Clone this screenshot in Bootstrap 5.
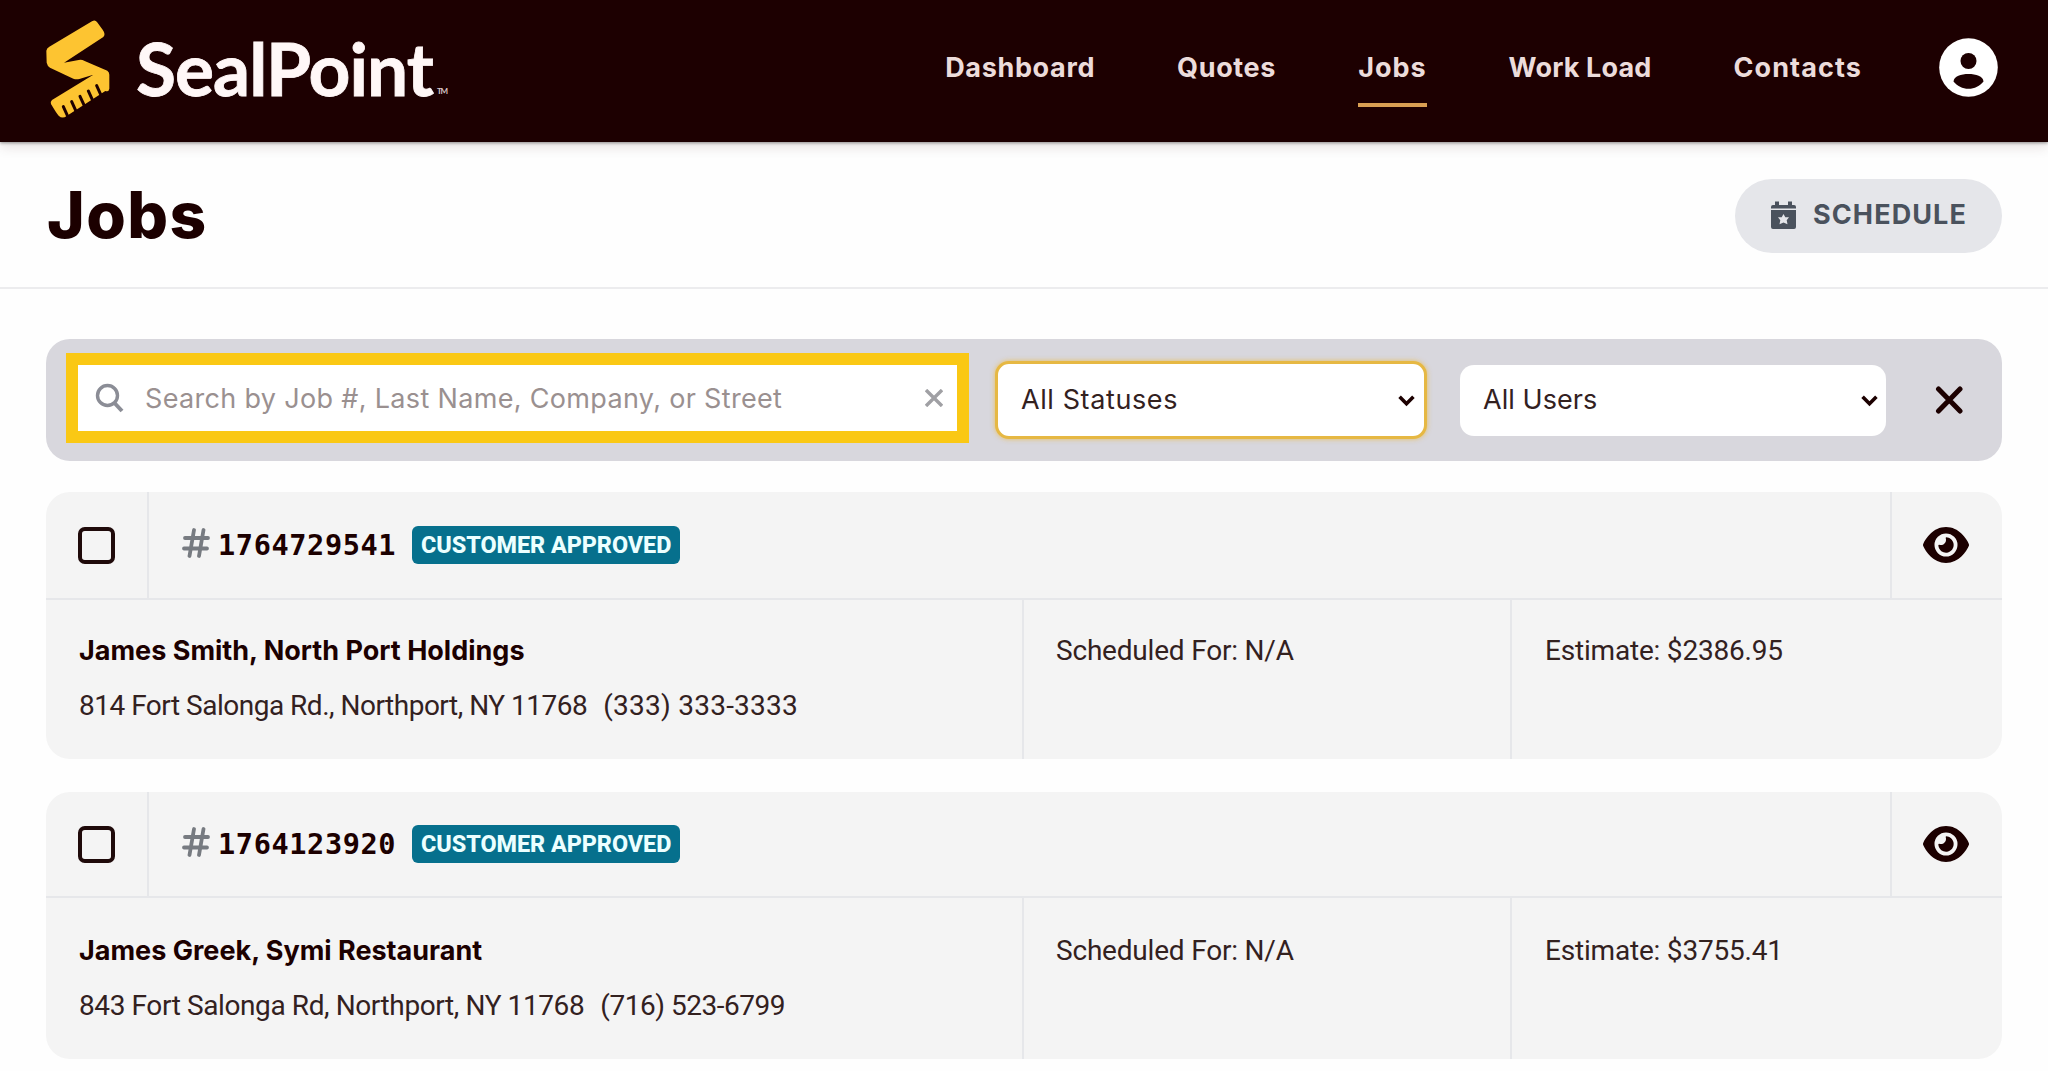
<!DOCTYPE html>
<html lang="en">
<head>
<meta charset="utf-8">
<meta name="viewport" content="width=device-width, initial-scale=1">
<title>SealPoint - Jobs</title>
<link rel="stylesheet" href="https://cdn.jsdelivr.net/npm/bootstrap@5.3.0/dist/css/bootstrap.min.css">
<style>
  :root { --ink: #1c0000; --gold: #fac814; --line: #e6e7ea; }
  body { font-family: Inter, Roboto, sans-serif; font-size: 27px; line-height: 1.5; color: var(--ink); background: #fefefe; overflow: hidden; }
  .page-x { padding-left: 46px; padding-right: 46px; }

  .top-bar { height: 142px; background: #1d0001; padding-bottom: 8px; box-shadow: 0 1px 3px rgba(0,0,0,.4), 0 5px 12px rgba(60,20,20,.12); position: relative; z-index: 1; }
  .brand-logo { margin-left: -6px; }
  .brand-name { font-family: Lato, sans-serif; font-weight: 700; stroke: #fff7f7; stroke-width: .8px; }
  .brand-tm { font-family: Lato, sans-serif; font-weight: 700; }
  .top-nav { gap: 82px; margin-right: 76px; padding-top: 3px; }
  .top-nav .nav-link { padding: 0; font-weight: 700; letter-spacing: .65px; color: #ecdcdb; position: relative; white-space: nowrap; }
  .top-nav .nav-jobs { letter-spacing: 1px; }
  .top-nav .nav-load { letter-spacing: .15px; }
  .top-nav .nav-contacts { letter-spacing: 1.1px; }
  .top-nav .nav-link.active::after { content: ""; position: absolute; left: 0; right: 0; bottom: -18px; height: 4px; background: #d99f53; }

  .title-row { height: 147px; padding-top: 2px; border-bottom: 2px solid #ececee; }
  .title-row h1 { font-size: 64px; font-weight: 800; letter-spacing: 1.4px; line-height: 1; padding-left: 1px; margin-top: -2px; }
  .btn-schedule { width: 267px; height: 74px; background: #e5e6ea; color: #4a525d; font-size: 27px; font-weight: 700; letter-spacing: 1.1px; }

  .filter-bar { height: 122px; margin-top: 50px; padding-left: 20px; background: #d8d7dd; border-radius: 24px; }
  .search-box { width: 903px; height: 90px; margin-bottom: 4px; border: 12px solid var(--gold); background: #fff; padding: 0 14px 0 17px; }
  .search-box input { font-size: 27px; letter-spacing: .33px; padding: 3px 0 0 21px; border: 0; background: none; box-shadow: none; }
  .search-box input::placeholder { color: #9a9090; opacity: 1; }
  .pick { font-size: 27px; color: #33211f; border: 0; border-radius: 14px; padding: 0 24px; height: 71px; background-color: #fff;
    background-image: url("data:image/svg+xml,%3Csvg xmlns='http://www.w3.org/2000/svg' viewBox='0 0 16 12'%3E%3Cpath d='M1.5 2.500 8 9l6.500-6.500' fill='none' stroke='%231c0000' stroke-width='3.400'/%3E%3C/svg%3E");
    background-size: 17px 13px; background-position: right 8px center; }
  .pick-status { width: 432px; height: 78px; margin-left: 26px; padding-left: 23px; letter-spacing: .6px; border: 3px solid #e6b843; box-shadow: 0 0 5px rgba(240,180,40,.7); background-position: right 9px center; }
  .pick-user { width: 426px; margin-left: 33px; letter-spacing: .05px; padding-left: 23px; }
  .reset-x { margin-left: 49px; }

  .job-list { gap: 33px; margin-top: 31px; }
  .job { background: #f4f4f4; border-radius: 24px; overflow: hidden; height: 267px; }
  .job-head { height: 108px; border-bottom: 2px solid var(--line); }
  .job + .job .job-head { height: 106px; }
  .job + .job .job-col { padding-top: 33px; }
  .cell-check { width: 103px; padding-left: 32px; border-right: 2px solid var(--line); }
  .cell-no { padding-left: 33px; }
  .cell-view { width: 112px; padding-right: 2px; border-left: 2px solid var(--line); color: var(--ink); }
  .job-check { width: 37px; height: 37px; margin: 0; border: 4px solid #1f0a0a; border-radius: 6px; background: transparent; }
  .job-no { font: 700 28.6px/1 "DejaVu Sans Mono", monospace; letter-spacing: .6px; margin: 0 16px 0 8px; }
  .status-tag { width: 268px; height: 38px; background: #06708d; color: #ecffff; border-radius: 6px; font: 800 23.4px/1 Roboto, sans-serif; letter-spacing: -.05px; padding: 1px 0 0; }
  .job-col { padding: 31px 33px 0; }
  .job-col + .job-col { border-left: 2px solid var(--line); padding-left: 32px; }
  .col-main { width: 976px; }
  .col-when { width: 488px; }
  .job-col p { margin: 0 0 15px; line-height: 40px; white-space: nowrap; }
  .plain { font-family: Roboto, sans-serif; font-size: 28px; letter-spacing: -.5px; color: #33211f; }
  .job + .job .col-main .plain { letter-spacing: -.4px; }
  .job .phone { margin-left: 16px; letter-spacing: .25px; }
  .job + .job .phone { letter-spacing: -.48px; }
  .col-when .plain, .col-sum .plain { letter-spacing: -.2px; }
  .job .col-sum { padding-left: 33px; }
</style>
<script src="https://cdn.jsdelivr.net/npm/bootstrap@5.3.0/dist/js/bootstrap.bundle.min.js"></script>
</head>
<body>
<svg class="d-none" xmlns="http://www.w3.org/2000/svg">
  <symbol id="eye" viewBox="0 32 576 448"><path fill="currentColor" d="M288 32c-80.800 0-145.500 36.800-192.600 80.600C48.600 156 17.300 208 2.500 243.700c-3.300 7.900-3.300 16.700 0 24.600C17.300 304 48.600 356 95.400 399.400C142.500 443.200 207.200 480 288 480s145.500-36.800 192.600-80.600c46.800-43.500 78.100-95.400 93-131.100c3.300-7.900 3.300-16.700 0-24.600c-14.900-35.700-46.200-87.700-93-131.100C433.500 68.800 368.800 32 288 32zM144 256a144 144 0 1 1 288 0 144 144 0 1 1-288 0zm144-64c0 35.300-28.700 64-64 64c-7.100 0-13.900-1.200-20.300-3.300c-5.500-1.800-11.900 1.600-11.700 7.400c.3 6.900 1.300 13.800 3.200 20.700c13.700 51.200 66.400 81.600 117.600 67.900s81.600-66.400 67.900-117.600c-11.100-41.500-47.800-69.400-88.600-71.100c-5.800-.2-9.200 6.100-7.400 11.700c2.100 6.400 3.300 13.200 3.300 20.300z"/></symbol>
  <symbol id="hash" viewBox="0 0 28 30"><path d="M12 2 7.500 28M21.500 2 17 28M3 10H26M2 20.500H25" fill="none" stroke="#777b81" stroke-width="3.800" stroke-linecap="round"/></symbol>
</svg>

<header class="top-bar page-x d-flex align-items-center">
  <a class="navbar-brand m-0 p-0" href="#">
    <svg width="410" height="120" viewBox="40 7 410 120" class="brand-logo d-block">
      <g transform="translate(40 10) scale(.3333)">
        <path fill="#fdc431" d="M28 110 156 34Q165 28 171 36L188 59Q198 73 190 81L72 158 116 150Q125 148 134 153L202 182Q208 186 208 194V236Q206 247 196 243L80 318Q67 328 56 317Q50 311 33 282Q30 276 36 270L160 194 118 207Q108 209 100 206L30 173Q22 168 20 158L19 122Q20 114 28 110Z"/>
        <path stroke="#1d0001" stroke-width="9" stroke-linecap="round" d="M70 290 86 325M95 275 111 310M120 259 136 294M145 243 161 278M170 227 186 262"/>
      </g>
      <text class="brand-name" x="136" y="95.500" font-size="73" textLength="298" lengthAdjust="spacing" fill="#fff7f7">SealPoint</text>
      <text class="brand-tm" x="437" y="94" font-size="8" textLength="11" fill="#d8c8c8">TM</text>
    </svg>
  </a>
  <nav class="nav top-nav ms-auto flex-nowrap">
    <a class="nav-link" href="#">Dashboard</a>
    <a class="nav-link" href="#">Quotes</a>
    <a class="nav-link nav-jobs active" href="#">Jobs</a>
    <a class="nav-link nav-load" href="#">Work Load</a>
    <a class="nav-link nav-contacts" href="#">Contacts</a>
  </nav>
  <svg width="60" height="60" viewBox="0 0 60 60" class="me-1">
    <circle cx="30.500" cy="30.500" r="29.300" fill="#fff"/>
    <circle cx="30.500" cy="24" r="8" fill="#1d0001"/>
    <path d="M15.500 44.500C16 39 23 37 30.500 37S45 39 45.500 44.500C42 49 36.500 51.800 30.500 51.800S19 49 15.500 44.500Z" fill="#1d0001"/>
  </svg>
</header>

<section class="title-row page-x d-flex align-items-center justify-content-between">
  <h1 class="mb-0">Jobs</h1>
  <button class="btn btn-schedule rounded-pill border-0 d-flex align-items-center justify-content-center" type="button">
    <svg width="27" height="29" viewBox="0 0 27 29" class="me-3"><path fill="#4a525d" d="M5 .5h4V4h9V.5h4V4h2a2 2 0 0 1 2 2v1.500H1V6a2 2 0 0 1 2-2h2zM1 9h25v17a2 2 0 0 1-2 2H3a2 2 0 0 1-2-2z"/><path fill="#e5e6ea" d="m13.500 13 1.800 3.300h3.700l-2.300 3 .8 4-4-1.800-4 1.800.8-4-2.300-3h3.700z"/></svg>SCHEDULE
  </button>
</section>

<main class="page-x">
  <form class="filter-bar d-flex align-items-center">
    <div class="search-box d-flex align-items-center">
      <svg class="flex-shrink-0" width="29" height="30" viewBox="0 0 29 30" fill="none" stroke="#8b8d96" stroke-width="3.400"><circle cx="12.500" cy="12.500" r="10"/><path d="m19.500 20 7.500 8" stroke-width="4"/></svg>
      <input class="form-control" type="text" placeholder="Search by Job #, Last Name, Company, or Street">
      <svg class="flex-shrink-0" width="18" height="18" viewBox="0 0 18 18" stroke="#a0a0a4" stroke-width="3.400"><path d="m1 1 16 16M17 1 1 17"/></svg>
    </div>
    <select class="form-select pick pick-status"><option>All Statuses</option></select>
    <select class="form-select pick pick-user"><option>All Users</option></select>
    <svg class="reset-x" width="28" height="28" viewBox="0 0 28 28" stroke="#1c0000" stroke-width="5" stroke-linecap="round"><path d="m3.500 3 21.500 22M25 3 3.500 25"/></svg>
  </form>

  <div class="job-list d-flex flex-column">
    <article class="job">
      <div class="job-head d-flex align-items-stretch">
        <div class="cell-check d-flex align-items-center"><input class="form-check-input job-check" type="checkbox"></div>
        <div class="cell-no d-flex align-items-center flex-grow-1">
          <svg width="28" height="30" class="mb-1"><use href="#hash"/></svg>
          <span class="job-no">1764729541</span>
          <span class="badge status-tag d-flex align-items-center justify-content-center">CUSTOMER APPROVED</span>
        </div>
        <div class="cell-view d-flex align-items-center justify-content-center"><svg width="46" height="36"><use href="#eye"/></svg></div>
      </div>
      <div class="d-flex h-100">
        <div class="job-col col-main"><p class="fw-bold">James Smith, North Port Holdings</p><p class="plain">814 Fort Salonga Rd., Northport, NY 11768<span class="phone">(333) 333-3333</span></p></div>
        <div class="job-col col-when"><p class="plain">Scheduled For: N/A</p></div>
        <div class="job-col col-sum"><p class="plain">Estimate: $2386.95</p></div>
      </div>
    </article>
    <article class="job">
      <div class="job-head d-flex align-items-stretch">
        <div class="cell-check d-flex align-items-center"><input class="form-check-input job-check" type="checkbox"></div>
        <div class="cell-no d-flex align-items-center flex-grow-1">
          <svg width="28" height="30" class="mb-1"><use href="#hash"/></svg>
          <span class="job-no">1764123920</span>
          <span class="badge status-tag d-flex align-items-center justify-content-center">CUSTOMER APPROVED</span>
        </div>
        <div class="cell-view d-flex align-items-center justify-content-center"><svg width="46" height="36"><use href="#eye"/></svg></div>
      </div>
      <div class="d-flex h-100">
        <div class="job-col col-main"><p class="fw-bold">James Greek, Symi Restaurant</p><p class="plain">843 Fort Salonga Rd, Northport, NY 11768<span class="phone">(716) 523-6799</span></p></div>
        <div class="job-col col-when"><p class="plain">Scheduled For: N/A</p></div>
        <div class="job-col col-sum"><p class="plain">Estimate: $3755.41</p></div>
      </div>
    </article>
  </div>
</main>
</body>
</html>
